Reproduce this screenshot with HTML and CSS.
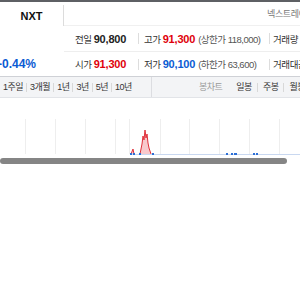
FILE: index.html
```html
<!DOCTYPE html>
<html lang="ko">
<head>
  <meta charset="UTF-8" />
  <meta name="viewport" content="width=device-width, initial-scale=1.0" />
  <title>NXT 시세</title>
  <link rel="stylesheet" href="styles.css">
</head>
<body>
  <div class="page">
    <div class="tabs">
      <div class="tab active">NXT</div>
      <div class="tab-note">넥스트레이드</div>
    </div>

    <div class="quote">
      <div class="rate-col">
        <div class="rate-top"></div>
        <div class="rate down">-0.44%</div>
      </div>
      <div class="rows">
        <div class="row">
          <div class="cell c1"><span class="lbl">전일</span><b>90,800</b></div>
          <div class="cell c2"><span class="lbl">고가</span><b class="up">91,300</b><span class="sub">(상한가 118,000)</span></div>
          <div class="cell c3"><span class="lbl">거래량</span><b>3,012</b></div>
        </div>
        <div class="row">
          <div class="cell c1"><span class="lbl">시가</span><b class="up">91,300</b></div>
          <div class="cell c2"><span class="lbl">저가</span><b class="down">90,100</b><span class="sub">(하한가 63,600)</span></div>
          <div class="cell c3"><span class="lbl">거래대금</span><b>273</b></div>
        </div>
      </div>
    </div>

    <div class="period">
      <div class="period-left">
        <span>1주일</span><span>3개월</span><span>1년</span><span>3년</span><span>5년</span><span>10년</span>
      </div>
      <div class="period-right">
        <span class="muted">봉차트</span><span>일봉</span><span>주봉</span><span>월봉</span>
      </div>
    </div>

    <div class="chart">
      <svg width="300" height="60" viewBox="0 0 300 60">
        <g stroke="#eeeeee" stroke-width="1">
          <line x1="25.5" y1="21" x2="25.5" y2="56"/>
          <line x1="55.5" y1="21" x2="55.5" y2="56"/>
          <line x1="85.5" y1="21" x2="85.5" y2="56"/>
          <line x1="115.5" y1="21" x2="115.5" y2="56"/>
          <line x1="129.5" y1="21" x2="129.5" y2="56"/>
          <line x1="160.5" y1="21" x2="160.5" y2="56"/>
          <line x1="189.5" y1="21" x2="189.5" y2="56"/>
          <line x1="219.5" y1="21" x2="219.5" y2="56"/>
          <line x1="249.5" y1="21" x2="249.5" y2="56"/>
          <line x1="279.5" y1="21" x2="279.5" y2="56"/>
        </g>
        <line x1="130" y1="56.5" x2="300" y2="56.5" stroke="#c9d8f0" stroke-width="1"/>
        <path d="M131 56 L133 51 L134 56 L140 56 L142 46 L143 38 L144 42 L145 32 L146 40 L147 36 L148 45 L149 50 L151 56 Z" fill="#f8c9cc"/>
        <path d="M131 56 L133 51 L134 56 M140 56 L142 46 L143 38 L144 42 L145 32 L146 40 L147 36 L148 45 L149 50 L151 56" fill="none" stroke="#e0303a" stroke-width="1"/>
        <g fill="#2c6fd6">
          <rect x="130" y="55" width="2" height="2"/>
          <rect x="133" y="55" width="2" height="2"/>
          <rect x="139" y="55" width="2" height="2"/>
          <rect x="152" y="55" width="2" height="2"/>
          <rect x="226" y="55" width="2" height="2"/>
          <rect x="231" y="55" width="2" height="2"/>
          <rect x="234" y="55" width="3" height="2"/>
          <rect x="253" y="55" width="2" height="2"/>
          <rect x="256" y="55" width="2" height="2"/>
        </g>
      </svg>
    </div>

    <div class="scroll">
      <div class="thumb"></div>
    </div>
  </div>
</body>
</html>
```

FILE: styles.css
```css
* { box-sizing: border-box; }
body {
  margin: 0;
  background: #ffffff;
  font-family: "Liberation Sans", "Noto Sans CJK KR", sans-serif;
  font-size: 11px;
  color: #222;
}
.page {
  width: 300px;
  height: 300px;
  overflow: hidden;
  border-top: 2px solid #5e6064;
}
.tabs {
  display: flex;
  align-items: stretch;
  height: 24px;
}
.tab {
  width: 64px;
  flex-shrink: 0;
  display: flex;
  align-items: center;
  justify-content: center;
  font-weight: bold;
  font-size: 11px;
  color: #111;
  border-right: 1px solid #dcdcdc;
  margin-top: 3px;
}
.tab-note {
  flex: 1;
  display: flex;
  align-items: center;
  justify-content: flex-start;
  padding-left: 203px;
  font-size: 9px;
  letter-spacing: -0.4px;
  color: #777;
  white-space: nowrap;
  overflow: hidden;
  border-bottom: 1px solid #f0f0f0;
}
.quote {
  display: flex;
  height: 51px;
  border-bottom: 1px solid #cfd1d6;
}
.rate-col {
  width: 64px;
  flex-shrink: 0;
  display: flex;
  flex-direction: column;
}
.rate-top { height: 25px; }
.rate {
  height: 25px;
  display: flex;
  align-items: center;
  font-size: 12px;
  font-weight: bold;
  margin-left: -2px;
}
.rows {
  flex: 1;
  display: flex;
  flex-direction: column;
  min-width: 0;
}
.row {
  height: 25px;
  display: flex;
  align-items: center;
  white-space: nowrap;
}
.row + .row { border-top: 1px solid #eeeeee; }
.cell {
  display: flex;
  align-items: center;
  gap: 2px;
  flex-shrink: 0;
}
.c1 { width: 74px; padding-left: 11px; }
.c2 { width: 131px; padding-left: 5px; border-left: 1px solid #dddddd; height: 11px; }
.c3 { padding-left: 3px; border-left: 1px solid #dddddd; height: 11px; }
.lbl { color: #333; font-size: 9.5px; letter-spacing: -0.4px; }
.cell b { font-size: 11px; color: #222; letter-spacing: -0.2px; }
.sub { font-size: 9.5px; color: #555; letter-spacing: -0.5px; margin-left: 1px; }
.up { color: #e0000b !important; }
.down { color: #0b5bd3 !important; }
.period {
  display: flex;
  height: 21px;
  background: #f3f4f6;
  border-bottom: 1px solid #e2e4e8;
  white-space: nowrap;
  font-size: 9px;
  letter-spacing: -0.5px;
  color: #333;
}
.period-left {
  width: 152px;
  flex-shrink: 0;
  display: flex;
  align-items: center;
  padding-left: 3px;
  border-right: 1px solid #dcdde1;
}
.period-left span + span,
.period-right span + span:not(:nth-child(2)) {
  border-left: 1px solid #d8d8d8;
}
.period-left span { padding: 0 3px; line-height: 9px; }
.period-left span:first-child { padding-left: 0; }
.period-right {
  flex: 1;
  display: flex;
  align-items: center;
  justify-content: flex-start;
  padding-left: 43px;
}
.period-right span { padding: 0 5px; line-height: 9px; }
.period-right .muted { color: #9a9a9a; padding: 0 9px 0 4px; }
.chart { height: 60px; }
.chart svg { display: block; }
.scroll {
  height: 7px;
  padding-right: 13px;
}
.thumb {
  height: 6px;
  background: #858585;
  border-radius: 3px;
}
```
